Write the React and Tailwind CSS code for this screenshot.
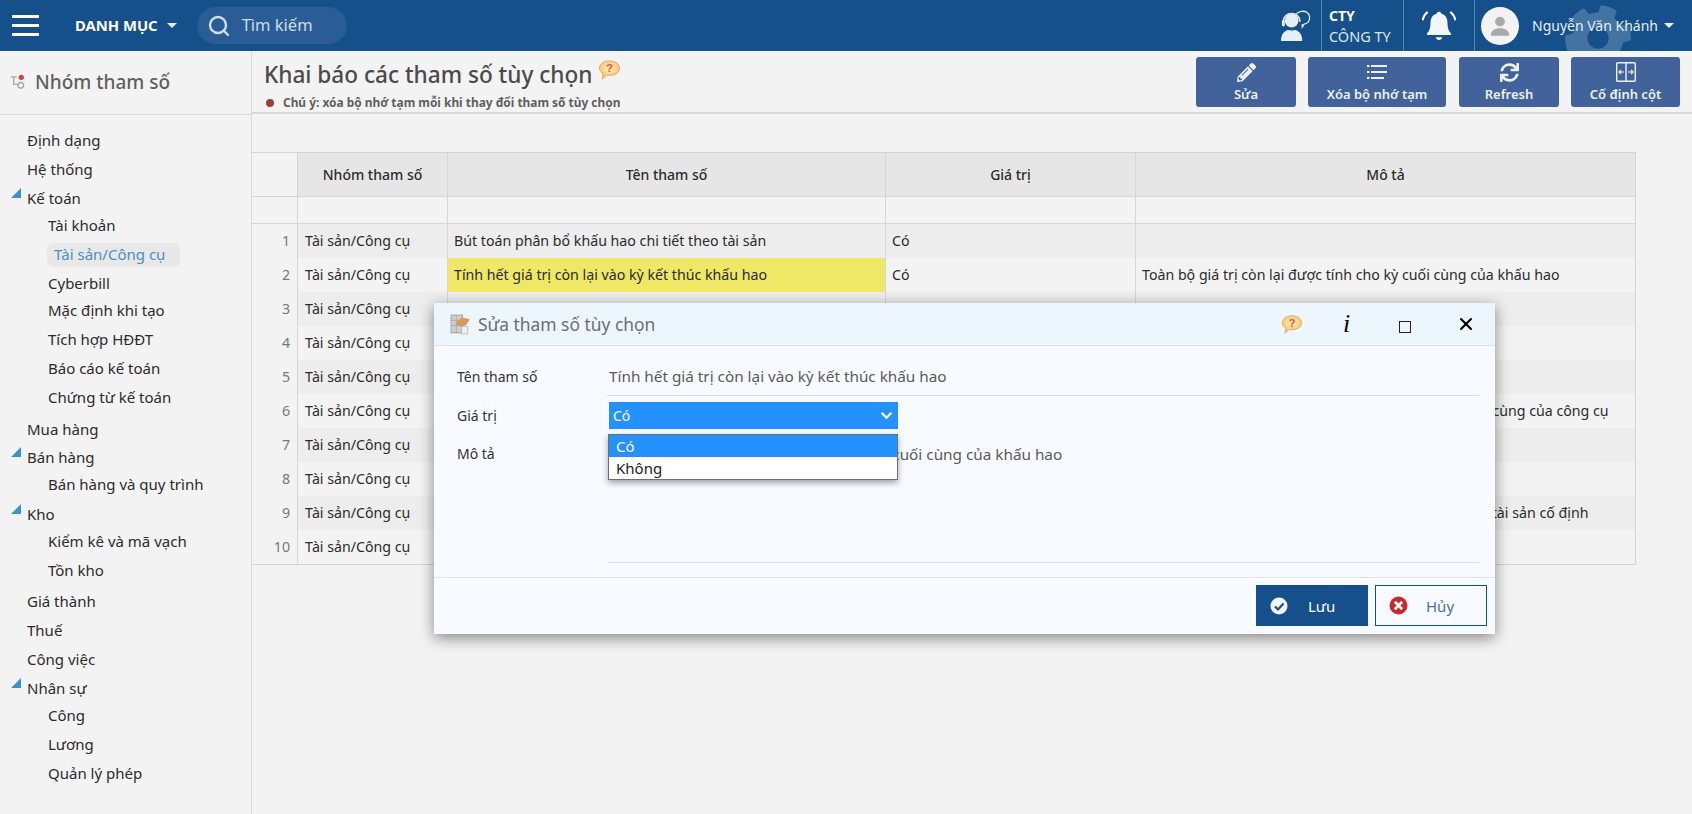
import { FaPencilAlt, FaSync, FaCog } from 'react-icons/fa'
import { Search, X } from 'lucide-react'

const sidebar = [
  { label: 'Định dạng', h: 'mt-0' },
  { label: 'Hệ thống', h: 'mt-[2px]' },
  { label: 'Kế toán', open: true, h: 'mt-[2px]' },
  { label: 'Tài khoản', sub: true, h: 'mt-0' },
  { label: 'Tài sản/Công cụ', sub: true, active: true, h: 'mt-[2px]' },
  { label: 'Cyberbill', sub: true, h: 'mt-[2px]' },
  { label: 'Mặc định khi tạo', sub: true, h: 'mt-0' },
  { label: 'Tích hợp HĐĐT', sub: true, h: 'mt-[2px]' },
  { label: 'Báo cáo kế toán', sub: true, h: 'mt-[2px]' },
  { label: 'Chứng từ kế toán', sub: true, h: 'mt-[2px]' },
  { label: 'Mua hàng', h: 'mt-[5px]' },
  { label: 'Bán hàng', open: true, h: 'mt-px' },
  { label: 'Bán hàng và quy trình', sub: true, h: 'mt-0' },
  { label: 'Kho', open: true, h: 'mt-[3px]' },
  { label: 'Kiểm kê và mã vạch', sub: true, h: 'mt-0' },
  { label: 'Tồn kho', sub: true, h: 'mt-[2px]' },
  { label: 'Giá thành', h: 'mt-[4px]' },
  { label: 'Thuế', h: 'mt-[2px]' },
  { label: 'Công việc', h: 'mt-[2px]' },
  { label: 'Nhân sự', open: true, h: 'mt-[2px]' },
  { label: 'Công', sub: true, h: 'mt-0' },
  { label: 'Lương', sub: true, h: 'mt-[2px]' },
  { label: 'Quản lý phép', sub: true, h: 'mt-[2px]' },
]

const rows = [
  { name: 'Bút toán phân bổ khấu hao chi tiết theo tài sản', value: 'Có', desc: '' },
  { name: 'Tính hết giá trị còn lại vào kỳ kết thúc khấu hao', value: 'Có', desc: 'Toàn bộ giá trị còn lại được tính cho kỳ cuối cùng của khấu hao', hl: true },
  { name: '', value: '', desc: '' },
  { name: '', value: '', desc: '' },
  { name: '', value: '', desc: '' },
  { name: '', value: '', desc: 'Toàn bộ giá trị còn lại phân bổ được tính cho kỳ cuối cùng của công cụ' },
  { name: '', value: '', desc: '' },
  { name: '', value: '', desc: '' },
  { name: '', value: '', desc: 'Khấu hao tính từ ngày bắt đầu đưa vào sử dụng của tài sản cố định' },
  { name: '', value: '', desc: '' },
]

function HelpBubble({ className }) {
  return (
    <svg viewBox="0 0 24 22" className={className}>
      <defs>
        <radialGradient id="bub" cx="50%" cy="40%" r="65%">
          <stop offset="0%" stopColor="#fff3c4" />
          <stop offset="100%" stopColor="#f7b55c" />
        </radialGradient>
      </defs>
      <path d="M12 1.500c6 0 10.500 3.200 10.500 7.600S18 16.600 12 16.600c-1 0-2 0-3-.3L4.500 20.500l.8-5.500C3 13.600 1.500 11.500 1.500 9.100 1.500 4.700 6 1.500 12 1.500z" fill="url(#bub)" stroke="#eba35a" strokeWidth="1" />
      <text x="12" y="13.500" textAnchor="middle" fontSize="12" fontWeight="700" fill="#e2562c" fontFamily="Liberation Sans, sans-serif">?</text>
    </svg>
  )
}

function Caret({ className }) {
  return <span className={`inline-block w-0 h-0 border-x-[5px] border-x-transparent border-t-[5px] ${className}`} />
}

function Topbar() {
  return (
    <div className="relative h-[51px] bg-[#15508a] flex items-center overflow-hidden text-white">
      <FaCog className="absolute left-[1564px] top-[4px] w-[68px] h-[68px] text-white/20 rotate-[20deg]" />
      <div className="ml-[12px] w-[27px] flex flex-col gap-[6px]">
        <span className="h-[3px] bg-white" />
        <span className="h-[3px] bg-white" />
        <span className="h-[3px] bg-white" />
      </div>
      <span className="ml-[36px] text-[14.800px] font-bold">DANH MỤC</span>
      <Caret className="ml-[9px] border-t-white/90" />
      <div className="ml-[20px] w-[150px] h-[37px] rounded-full bg-[#2a5c95] flex items-center pl-[10px] text-[#cfdcea]">
        <Search size={24} strokeWidth={2.400} />
        <span className="ml-[11px] text-[16.500px]">Tìm kiếm</span>
      </div>
      <div className="relative ml-auto flex items-center h-full">
        <svg viewBox="0 0 32 34" className="w-[31px] h-[33px] mr-[10px]" fill="none">
          <path d="M17 5c2-3 8-3.500 11-1.500s3.500 7 1 10c-1 1-2.500 2-4 2l-2 3v-3" stroke="#e8eef5" strokeWidth="1.300" />
          <circle cx="12" cy="12" r="7" fill="#e8eef5" />
          <path d="M3.500 13c0-11 17-11 17 0" stroke="#e8eef5" strokeWidth="1.800" />
          <rect x="2" y="11" width="3" height="7" rx="1.500" fill="#e8eef5" />
          <path d="M1 33c0-8 4-12 11-12s11 4 11 12z" fill="#e8eef5" />
          <path d="M7 19c2 3 5 3 8 2" stroke="#15508a" strokeWidth="1.200" />
        </svg>
        <div className="w-[82px] h-full border-l border-[#5c85b0] pl-[7px] flex flex-col justify-center leading-[20px]">
          <span className="text-[14px] font-bold">CTY</span>
          <span className="text-[14.500px] text-[#dbe5f0]">CÔNG TY</span>
        </div>
        <div className="w-[71px] h-full border-l border-[#5c85b0] flex items-center justify-center">
          <svg viewBox="1 2 30 28" className="w-[34px] h-[32px]" fill="#f3f6fa">
            <path d="M16 3.500c1.200 0 2 .8 2 1.800 3.800.9 5.500 4 5.500 8 0 4.500 1 7 3 9.200v1.500H5.500v-1.500c2-2.200 3-4.700 3-9.200 0-4 1.700-7.100 5.500-8 0-1 .8-1.800 2-1.800z" />
            <path d="M13 26h6c-.5 1.500-1.500 2.300-3 2.300s-2.500-.8-3-2.300z" />
            <path d="M6 3.500C3.500 5.500 2 8 1.500 11M26 3.500c2.500 2 4 4.500 4.500 7.500" stroke="#f3f6fa" strokeWidth="2" fill="none" />
          </svg>
        </div>
        <div className="w-[218px] h-full border-l border-[#5c85b0] flex items-center pl-[6px]">
          <div className="w-[38px] h-[38px] rounded-full bg-[#f3f3f3] flex items-center justify-center overflow-hidden">
            <svg viewBox="0 0 24 24" className="w-[26px] h-[26px]" fill="#a9a9a9">
              <circle cx="12" cy="8" r="4.500" />
              <path d="M3.500 21c0-5 3.500-7 8.500-7s8.500 2 8.500 7z" />
            </svg>
          </div>
          <span className="ml-[13px] text-[14px] text-[#e6edf5]">Nguyễn Văn Khánh</span>
          <Caret className="ml-[6px] border-t-white/90" />
        </div>
      </div>
    </div>
  )
}

function Sidebar() {
  return (
    <div className="w-[252px] shrink-0 border-r border-[#d9d9d9] bg-[#f3f3f3] h-[763px]">
      <div className="h-[64px] border-b border-[#d9d9d9] flex items-center pl-[9px]">
        <svg viewBox="0 0 18 18" className="w-[17px] h-[17px]" fill="none">
          <path d="M2 3h6M5 3v8h5" stroke="#a8a8a8" strokeWidth="1.400" />
          <circle cx="12.500" cy="12" r="3" stroke="#a8a8a8" strokeWidth="1.500" />
          <circle cx="13" cy="3.500" r="2.800" fill="#d8404a" />
        </svg>
        <span className="ml-[9px] text-[19px] font-medium text-[#5f5f5f]">Nhóm tham số</span>
      </div>
      <div className="pt-[12px] text-[15px] text-[#2b2b2b]">
        {sidebar.map((item) => (
          <div key={item.label} className={`relative flex items-center h-[27px] ${item.h} ${item.sub ? 'pl-[48px]' : 'pl-[27px]'}`}>
            {item.open && (
              <span className="absolute left-[11px] top-[3px] w-0 h-0 border-l-[10px] border-l-transparent border-b-[10px] border-b-[#3a94c9]" />
            )}
            {item.active ? (
              <span className="h-[24px] px-[7px] -ml-[1px] rounded-[6px] bg-[#e8e8e8] text-[#4a8fc0] flex items-center w-[133px] whitespace-nowrap">{item.label}</span>
            ) : (
              item.label
            )}
          </div>
        ))}
      </div>
    </div>
  )
}

function ActionButton({ label, w, children }) {
  return (
    <div className={`${w} h-[50px] rounded-[3px] bg-[#41629b] text-[#edf1f7] flex flex-col items-center justify-center`}>
      <div className="h-[24px] flex items-center">{children}</div>
      <span className="text-[13px] font-semibold leading-[20px]">{label}</span>
    </div>
  )
}

function Table() {
  const cols = ['w-[46px]', 'w-[150px]', 'w-[438px]', 'w-[250px]', 'w-[499px]']
  return (
    <div className="w-[1384px] border-t border-r border-[#d5d5d5] text-[14.200px] text-[#2b2b2b]">
      <div className="flex h-[44px] border-b border-[#d5d5d5]">
        <div className={`${cols[0]} border-r border-[#d5d5d5]`} />
        {['Nhóm tham số', 'Tên tham số', 'Giá trị', 'Mô tả'].map((h, i) => (
          <div key={h} className={`${cols[i + 1]} ${i < 3 ? 'border-r border-[#d5d5d5]' : ''} bg-[#e6e6e6] flex items-center justify-center text-[14px] font-medium`}>{h}</div>
        ))}
      </div>
      <div className="flex h-[27px] border-b border-[#d5d5d5]">
        <div className={`${cols[0]} border-r border-[#d5d5d5]`} />
        <div className={`${cols[1]} border-r border-[#d5d5d5]`} />
        <div className={`${cols[2]} border-r border-[#d5d5d5]`} />
        <div className={`${cols[3]} border-r border-[#d5d5d5]`} />
      </div>
      {rows.map((r, i) => {
        const stripe = i % 2 === 0 ? 'bg-[#ededed]' : ''
        return (
          <div key={i} className="flex h-[34px]">
            <div className={`${cols[0]} border-r border-[#d5d5d5] flex items-center justify-end pr-[7px] text-[#777777]`}>{i + 1}</div>
            <div className={`${cols[1]} ${stripe} border-r border-[#d5d5d5] flex items-center pl-[7px]`}>Tài sản/Công cụ</div>
            <div className={`${cols[2]} ${r.hl ? 'bg-[#eee866]' : stripe} border-r border-[#d5d5d5] flex items-center pl-[6px]`}>{r.name}</div>
            <div className={`${cols[3]} ${stripe} border-r border-[#d5d5d5] flex items-center pl-[6px]`}>{r.value}</div>
            <div className={`${cols[4]} ${stripe} flex items-center pl-[6px] whitespace-nowrap overflow-hidden`}>{r.desc}</div>
          </div>
        )
      })}
      <div className="border-b border-[#d5d5d5]" />
    </div>
  )
}

function Dialog() {
  return (
    <div className="absolute left-[434px] top-[303px] w-[1061px] h-[331px] bg-[#f7fbff] shadow-[0_4px_14px_rgba(0,0,0,0.45)] flex flex-col text-[14px]">
      <div className="h-[43px] shrink-0 bg-[#edf6fd] border-b border-[#dfe3e6] flex items-center relative">
        <svg viewBox="0 0 20 20" className="ml-[16px] w-[21px] h-[21px]">
          <rect x="1" y="1" width="11" height="17" fill="#cfcfcf" stroke="#999999" strokeWidth="0.800" />
          <path d="M1 6h11M1 11h11M6 1v17" stroke="#999999" strokeWidth="0.600" />
          <path d="M5 9l6-6 8 2-4 6-6 1z" fill="#d69a5c" />
          <rect x="11" y="12" width="6" height="7" fill="#eeeeee" stroke="#aaaaaa" strokeWidth="0.600" />
        </svg>
        <span className="ml-[7px] mt-[1px] text-[17.400px] text-[#6b6f73]">Sửa tham số tùy chọn</span>
        <div className="ml-auto flex items-center text-black">
          <HelpBubble className="w-[22px] h-[21px]" />
          <span className="ml-[40px] w-[12px] text-[26px] italic font-['Liberation_Serif',serif] leading-none">i</span>
          <span className="ml-[44px] mt-[5px] w-[12px] h-[12px] border border-[#222222]" />
          <X size={20} strokeWidth={2.500} className="ml-[45px] mr-[19px]" />
        </div>
      </div>
      <div className="flex-1 relative pt-[7px] text-[#444444]">
        <div className="flex h-[43px]">
          <span className="w-[173px] pl-[23px] pt-[13px] text-[#333333]">Tên tham số</span>
          <div className="w-[872px] h-full border-b border-[#d9dde0] pl-[2px] pt-[12px] text-[15.300px] text-[#5a5a5a]">Tính hết giá trị còn lại vào kỳ kết thúc khấu hao</div>
        </div>
        <div className="flex h-[27px] mt-[6px] items-center">
          <span className="w-[175px] pl-[23px] text-[#333333]">Giá trị</span>
          <div className="w-[289px] h-[27px] bg-[#2491ff] text-white flex items-center justify-between px-[4px]">
            Có
            <svg viewBox="0 0 12 8" className="w-[13px] h-[9px] mr-[1px]" fill="none">
              <path d="M1.500 1.500L6 6l4.500-4.500" stroke="white" strokeWidth="2" />
            </svg>
          </div>
        </div>
        <div className="flex mt-[14px]">
          <span className="w-[173px] pl-[23px] text-[#333333]">Mô tả</span>
          <div className="w-[872px] h-[120px] border-b border-[#d9dde0] pl-[5px] text-[15.300px] text-[#5a5a5a]">Toàn bộ giá trị còn lại được tính cho kỳ cuối cùng của khấu hao</div>
        </div>
        {/* open dropdown list */}
        <div className="absolute left-[174px] top-[88px] w-[290px] h-[46px] bg-white border border-[#6f6f6f] shadow-[0_3px_6px_rgba(0,0,0,0.35)] text-[#222222] text-[15px]">
          <div className="h-[22px] bg-[#2491ff] text-white pl-[7px] flex items-center">Có</div>
          <div className="h-[22px] pl-[7px] flex items-center">Không</div>
        </div>
      </div>
      <div className="h-[57px] shrink-0 border-t border-[#e1e4e7] flex items-start justify-end gap-[7px] pt-[7px] pr-[8px]">
        <div className="w-[112px] h-[41px] bg-[#15508a] text-white flex items-center pl-[14px]">
          <svg viewBox="0 0 18 18" className="w-[18px] h-[18px]">
            <circle cx="9" cy="9" r="8.500" fill="#f2f5f8" />
            <path d="M5 9.500L8 12.500l5.500-6" stroke="#15508a" strokeWidth="2.200" fill="none" />
          </svg>
          <span className="ml-[20px] mt-[1px] text-[15px]">Lưu</span>
        </div>
        <div className="w-[112px] h-[41px] border border-[#15508a] text-[#4a6f9c] flex items-center pl-[13px]">
          <svg viewBox="0 0 18 18" className="w-[19px] h-[19px]">
            <circle cx="9" cy="9" r="8.500" fill="#c92a2e" />
            <path d="M5.500 5.500l7 7m0-7l-7 7" stroke="#f7f7f7" strokeWidth="2.600" />
          </svg>
          <span className="ml-[18px] mt-[1px] text-[15px]">Hủy</span>
        </div>
      </div>
    </div>
  )
}

export default function App() {
  return (
    <div className="relative w-[1692px] h-[814px] overflow-hidden bg-[#f3f3f3] font-['Noto_Sans',sans-serif]">
      <Topbar />
      <div className="flex">
        <Sidebar />
        <div className="flex-1 min-w-0">
          <div className="h-[63px] border-b-2 border-[#d9d9d9] flex pl-[12px]">
            <div className="flex-1 pt-[10px]">
              <div className="flex items-start">
                <span className="text-[22.600px] font-medium leading-[28px] text-[#4a4a4a]">Khai báo các tham số tùy chọn</span>
                <HelpBubble className="ml-[6px] -mt-[2px] w-[23px] h-[22px]" />
              </div>
              <div className="flex items-center mt-[5px] text-[11.900px] font-bold text-[#5f5f5f]">
                <span className="ml-[2px] w-[8px] h-[8px] rounded-full bg-[#a33c3c] mr-[9px]" />
                Chú ý: xóa bộ nhớ tạm mỗi khi thay đổi tham số tùy chọn
              </div>
            </div>
            <div className="flex gap-[12px] pt-[6px] pr-[12px]">
              <ActionButton label="Sửa" w="w-[100px]"><FaPencilAlt size={19} /></ActionButton>
              <ActionButton label="Xóa bộ nhớ tạm" w="w-[138px]">
                <svg viewBox="0 0 20 14" className="w-[20px] h-[14px]" fill="#edf1f7">
                  <rect x="0" y="0" width="2.500" height="2" />
                  <rect x="4" y="0" width="16" height="2" />
                  <rect x="0" y="6" width="2.500" height="2" />
                  <rect x="4" y="6" width="16" height="2" />
                  <rect x="0" y="12" width="2.500" height="2" />
                  <rect x="4" y="12" width="13" height="2" />
                </svg>
              </ActionButton>
              <div className="ml-px">
                <ActionButton label="Refresh" w="w-[100px]"><FaSync size={19} /></ActionButton>
              </div>
              <ActionButton label="Cố định cột" w="w-[109px]">
                <svg viewBox="0 0 20 20" className="w-[20px] h-[20px]" fill="none" stroke="#edf1f7">
                  <rect x="0.700" y="0.700" width="18.600" height="18.600" rx="1" strokeWidth="1.400" />
                  <path d="M10 1v18" strokeWidth="1.400" />
                  <path d="M8 10H3m2-2l-2 2 2 2M12 10h5m-2-2l2 2-2 2" strokeWidth="1.200" />
                </svg>
              </ActionButton>
            </div>
          </div>
          <div className="pt-[38px]">
            <Table />
          </div>
        </div>
      </div>
      <Dialog />
    </div>
  )
}
